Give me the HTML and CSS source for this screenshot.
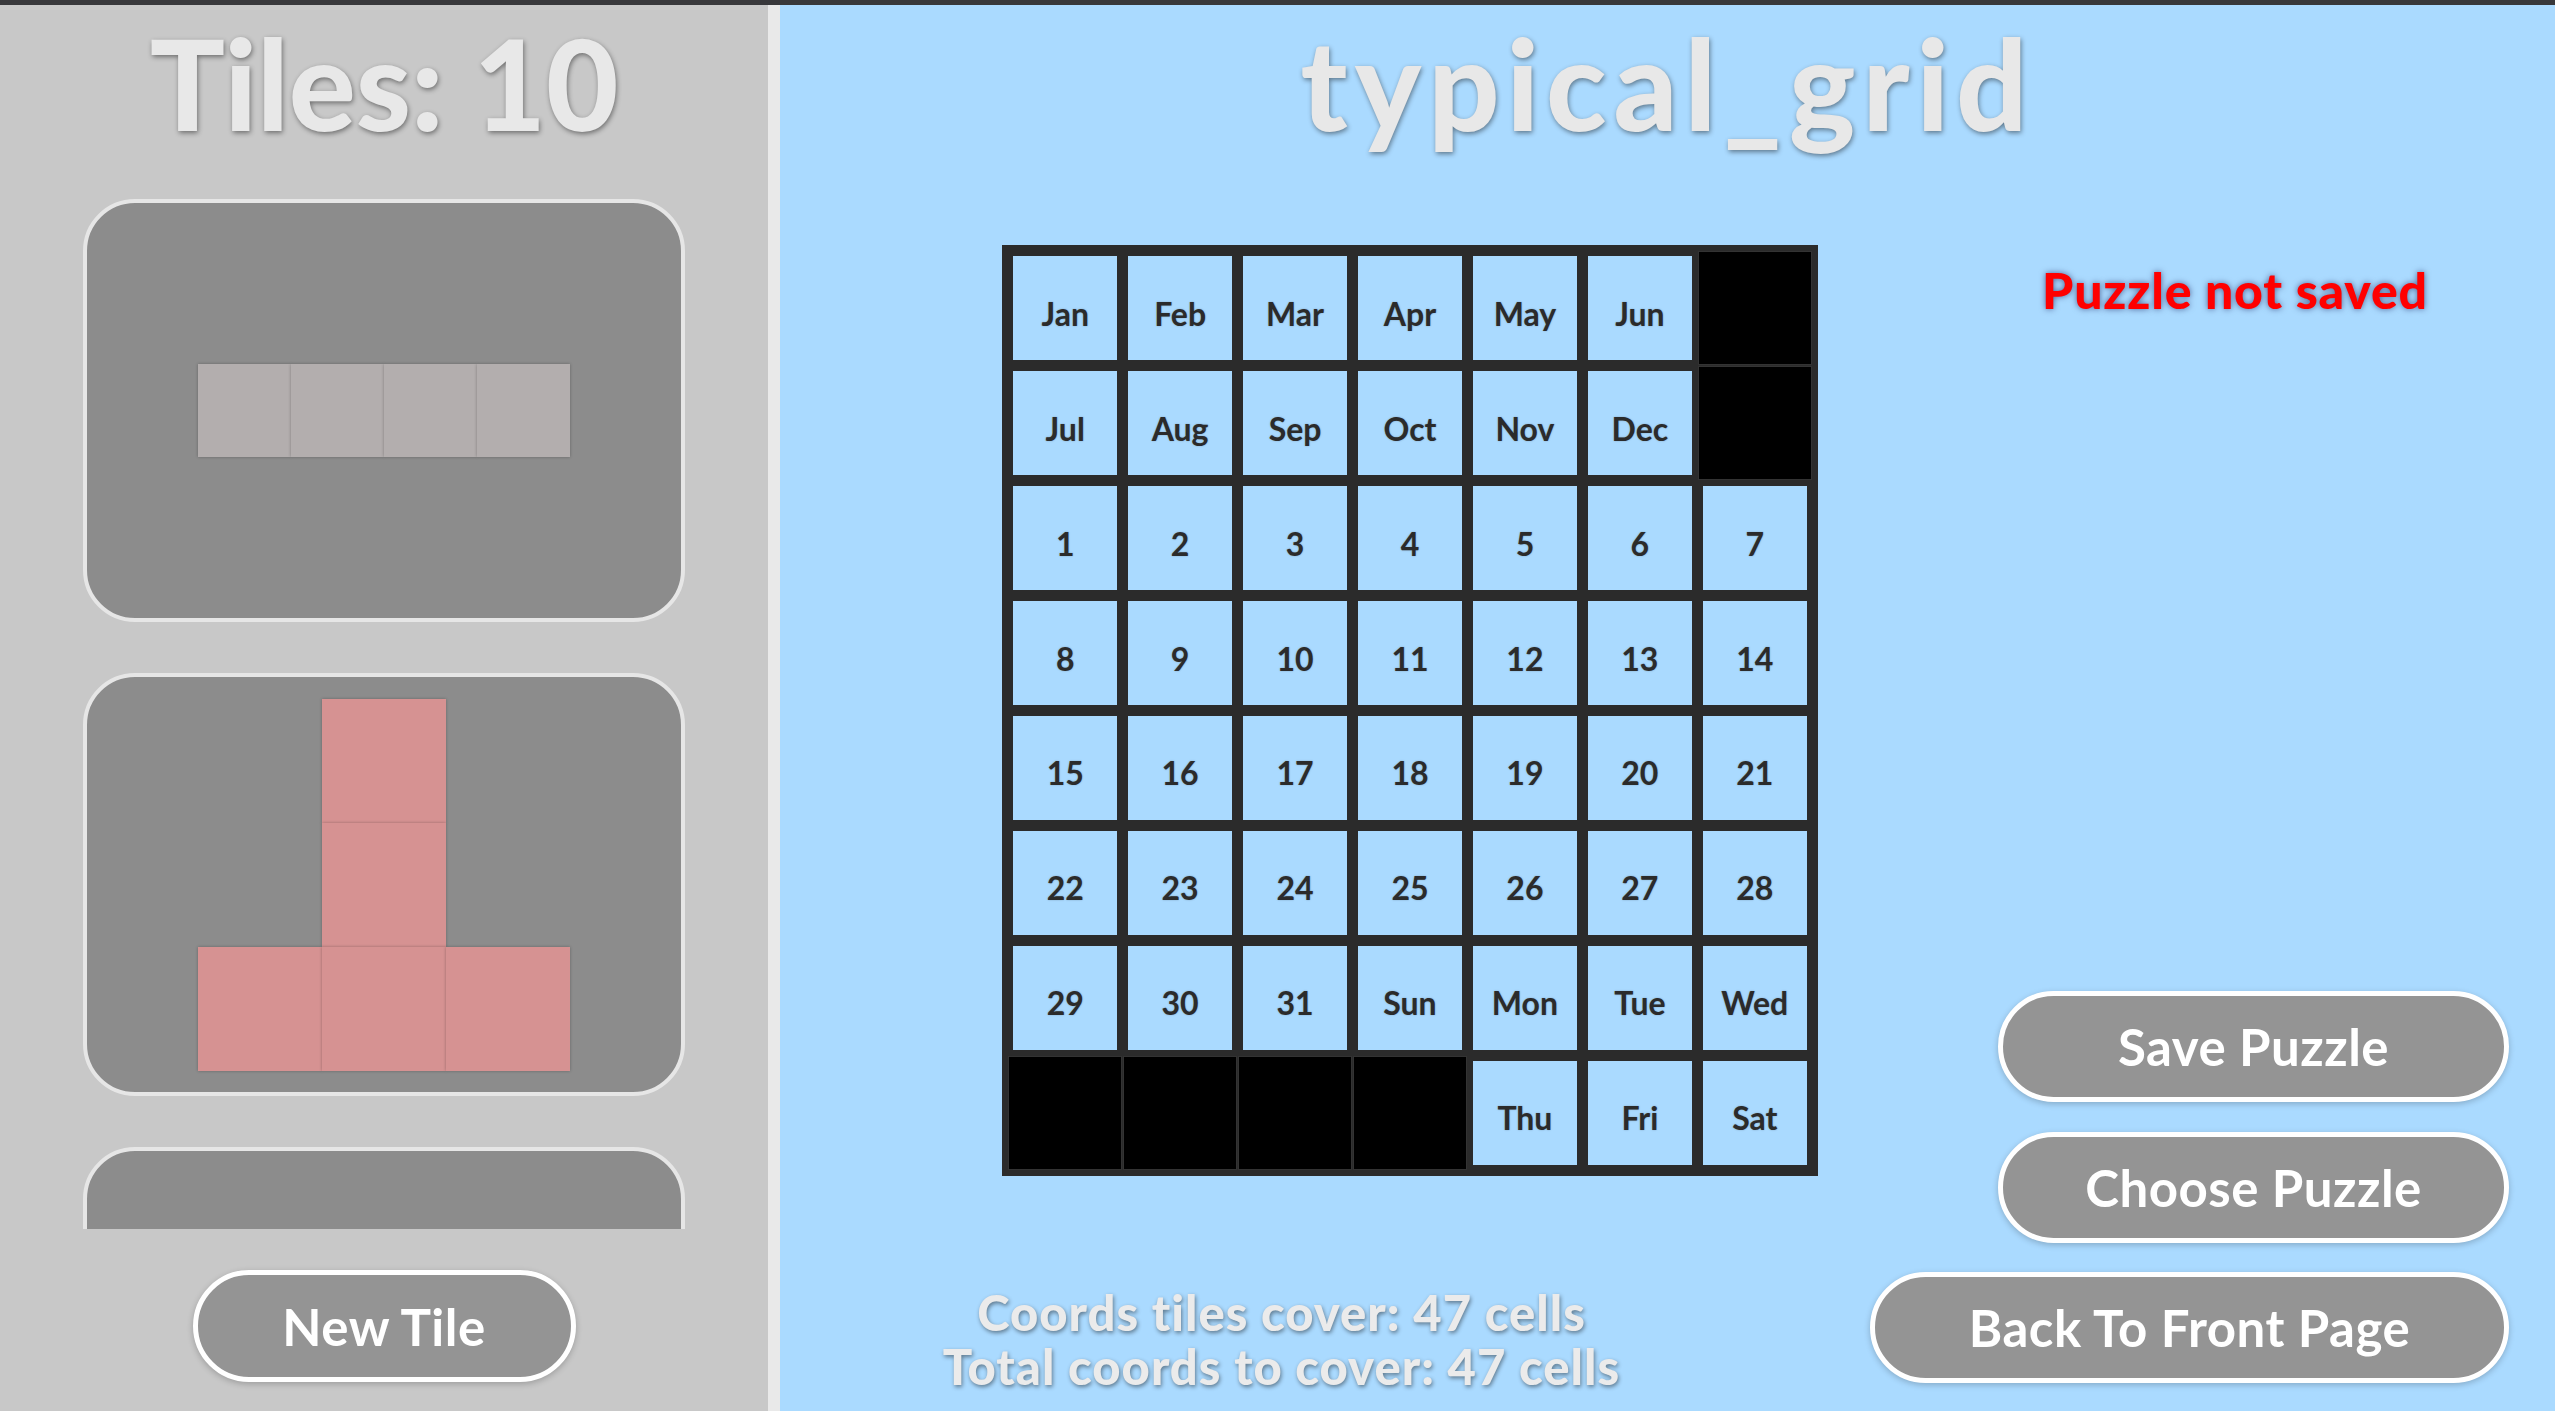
FILE: index.html
```html
<!DOCTYPE html>
<html lang="en">
<head>
<meta charset="utf-8">
<title>typical_grid</title>
<link rel="stylesheet" href="styles.css">
</head>
<body>
<div class="topbar"></div>
<div class="app">
  <aside class="sidebar">
    <h1 class="heading">Tiles: 10</h1>
    <div class="tile-list">
      <div class="tile-card">
        <div class="shape shape-i">
          <span class="sq sq-grey"></span><span class="sq sq-grey"></span><span class="sq sq-grey"></span><span class="sq sq-grey"></span>
        </div>
      </div>
      <div class="tile-card">
        <div class="shape shape-t">
          <span class="sq sq-pink t-top"></span>
          <span class="sq sq-pink t-mid"></span>
          <span class="sq sq-pink t-bl"></span>
          <span class="sq sq-pink t-bc"></span>
          <span class="sq sq-pink t-br"></span>
        </div>
      </div>
      <div class="tile-card"></div>
    </div>
    <button class="btn btn-new">New Tile</button>
  </aside>
  <main class="main">
    <h1 class="heading title">typical_grid</h1>
    <div class="board">
      <div class="cell">Jan</div><div class="cell">Feb</div><div class="cell">Mar</div><div class="cell">Apr</div><div class="cell">May</div><div class="cell">Jun</div><div class="cell blocked"></div>
      <div class="cell">Jul</div><div class="cell">Aug</div><div class="cell">Sep</div><div class="cell">Oct</div><div class="cell">Nov</div><div class="cell">Dec</div><div class="cell blocked"></div>
      <div class="cell">1</div><div class="cell">2</div><div class="cell">3</div><div class="cell">4</div><div class="cell">5</div><div class="cell">6</div><div class="cell">7</div>
      <div class="cell">8</div><div class="cell">9</div><div class="cell">10</div><div class="cell">11</div><div class="cell">12</div><div class="cell">13</div><div class="cell">14</div>
      <div class="cell">15</div><div class="cell">16</div><div class="cell">17</div><div class="cell">18</div><div class="cell">19</div><div class="cell">20</div><div class="cell">21</div>
      <div class="cell">22</div><div class="cell">23</div><div class="cell">24</div><div class="cell">25</div><div class="cell">26</div><div class="cell">27</div><div class="cell">28</div>
      <div class="cell">29</div><div class="cell">30</div><div class="cell">31</div><div class="cell">Sun</div><div class="cell">Mon</div><div class="cell">Tue</div><div class="cell">Wed</div>
      <div class="cell blocked"></div><div class="cell blocked"></div><div class="cell blocked"></div><div class="cell blocked"></div><div class="cell">Thu</div><div class="cell">Fri</div><div class="cell">Sat</div>
    </div>
    <div class="side">
      <p class="status">Puzzle not saved</p>
      <div class="actions">
        <button class="btn btn-save">Save Puzzle</button>
        <button class="btn btn-choose">Choose Puzzle</button>
        <button class="btn btn-back">Back To Front Page</button>
      </div>
    </div>
    <div class="counts">
      <p class="count-line">Coords tiles cover: 47 cells</p>
      <p class="count-line">Total coords to cover: 47 cells</p>
    </div>
  </main>
</div>
</body>
</html>
```
FILE: styles.css
```css
* { box-sizing: border-box; }

html, body {
  margin: 0;
  padding: 0;
  width: 2555px;
  height: 1411px;
  overflow: hidden;
  font-family: "Lato", "Noto Sans", sans-serif;
  font-weight: 700;
}

.topbar {
  height: 5px;
  background: #38383b;
}

.app {
  display: flex;
  height: 1406px;
}

/* ---------- sidebar ---------- */
.sidebar {
  width: 780px;
  flex: none;
  background: #c8c8c8;
  border-right: 12px solid #e9e9e9;
  display: flex;
  flex-direction: column;
  align-items: center;
}

.heading {
  margin: 3px 0 0;
  font-size: 125px;
  line-height: 150px;
  font-weight: 900;
  color: #e8e8e8;
  text-shadow: 1px 2px 5px rgba(0, 0, 0, 0.45);
  white-space: nowrap;
}

.tile-list {
  margin-top: 41px;
  height: 1030px;
  overflow: hidden;
  display: flex;
  flex-direction: column;
  gap: 51px;
}

.tile-card {
  width: 602px;
  height: 423px;
  flex: none;
  border: 4px solid #e6e6e6;
  border-radius: 52px;
  background: #8c8c8c;
  display: flex;
  align-items: center;
  justify-content: center;
}

.shape { display: grid; }

.shape-i {
  grid-template-columns: repeat(4, 93px);
  grid-template-rows: 93px;
}

.shape-t {
  grid-template-columns: repeat(3, 124px);
  grid-template-rows: repeat(3, 124px);
}

.sq {
  display: block;
  box-shadow: 0 0 3px rgba(0, 0, 0, 0.28);
}

.sq-grey { background: #b3aeae; }
.sq-pink { background: #d69292; }

.t-top { grid-column: 2; grid-row: 1; }
.t-mid { grid-column: 2; grid-row: 2; }
.t-bl  { grid-column: 1; grid-row: 3; }
.t-bc  { grid-column: 2; grid-row: 3; }
.t-br  { grid-column: 3; grid-row: 3; }

/* ---------- buttons ---------- */
.btn {
  font-family: inherit;
  font-weight: 700;
  font-size: 51px;
  letter-spacing: 0.5px;
  color: #ffffff;
  background: #949494;
  border: 5px solid #ffffff;
  border-radius: 60px;
  box-shadow: 0 2px 6px rgba(0, 0, 0, 0.22);
  padding: 0;
  cursor: pointer;
}

.btn-new {
  margin-top: 41px;
  width: 383px;
  height: 112px;
}

/* ---------- main ---------- */
.main {
  flex: 1;
  background: #aadaff;
  display: grid;
  grid-template-columns: 222px 816px 1fr;
  grid-template-rows: auto auto 1fr;
  grid-template-areas:
    "title title title"
    ".     board side"
    "counts counts side";
}

.title {
  grid-area: title;
  text-align: center;
  letter-spacing: 7px;
}

.board {
  grid-area: board;
  margin-top: 87px;
  width: 816px;
  height: 931px;
  background: #2b2b2b;
  padding: 11px;
  display: grid;
  grid-template-columns: repeat(7, 1fr);
  grid-template-rows: repeat(8, 1fr);
  gap: 10.5px;
}

.cell {
  background: #aadaff;
  display: flex;
  align-items: center;
  justify-content: center;
  padding-top: 10px;
  font-size: 32px;
  font-weight: 700;
  color: #2b2b2b;
  text-shadow: 0 0 2px rgba(0, 0, 0, 0.25);
}

.cell.blocked {
  background: #000000;
  margin: -5px;
  border: 1.5px solid #333333;
}

.side {
  grid-area: side;
  display: flex;
  flex-direction: column;
  padding: 0 46px 28px 0;
}

.status {
  margin: 102px -46px 0 97px;
  text-align: center;
  font-size: 50px;
  line-height: 60px;
  font-weight: 900;
  letter-spacing: 0.8px;
  color: #ff0000;
  text-shadow: 0 0 6px rgba(0, 0, 60, 0.55);
  white-space: nowrap;
}

.actions {
  margin-top: auto;
  display: flex;
  flex-direction: column;
  align-items: flex-end;
  gap: 29.5px;
}

.btn-save, .btn-choose {
  width: 511px;
  height: 111px;
}

.btn-back {
  width: 639px;
  height: 111px;
}

.counts {
  grid-area: counts;
  align-self: end;
  padding: 0 35px 18px 0;
  text-align: center;
}

.count-line {
  margin: 0;
  font-size: 49px;
  line-height: 54px;
  font-weight: 900;
  letter-spacing: 1px;
  color: #ebebeb;
  text-shadow: 1px 2px 4px rgba(0, 0, 0, 0.45);
  white-space: nowrap;
}
```
